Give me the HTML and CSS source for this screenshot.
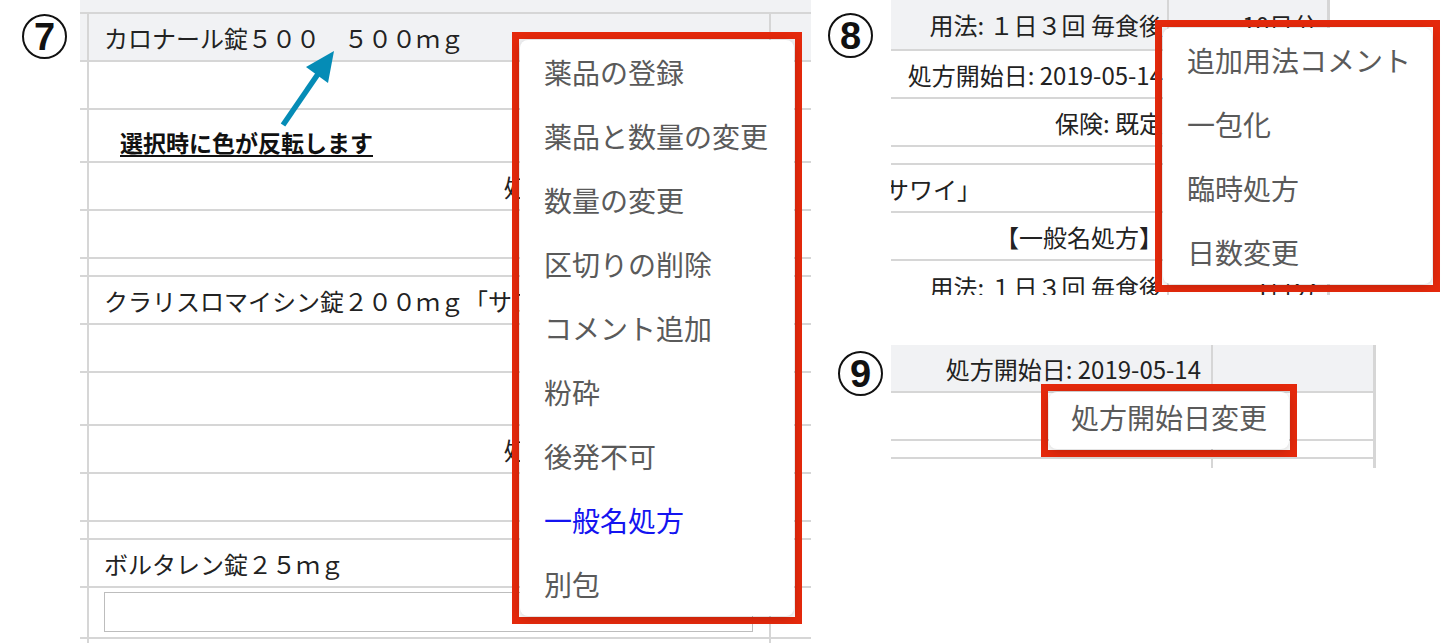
FILE: index.html
```html
<!DOCTYPE html>
<html lang="ja">
<head>
<meta charset="utf-8">
<title>処方メニュー</title>
<link rel="stylesheet" href="styles.css">
</head>
<body>
<div class="page">
  <section class="fig fig7">
    <div class="numcol"><div class="num">7</div></div>
    <div class="tbl t7">
      <div class="row strip"><div class="lead"></div><div class="main"></div><div class="side"></div></div>
      <div class="row sel"><div class="lead"></div><div class="main">カロナール錠５００　５００ｍｇ</div><div class="side"></div></div>
      <div class="row"><div class="lead"></div><div class="main r">【一般名処方】</div><div class="side"></div></div>
      <div class="row tall"><div class="lead"></div><div class="main r">用法: １日３回 毎食後</div><div class="side"></div></div>
      <div class="row"><div class="lead"></div><div class="main r">処方開始日: 2019-05-14</div><div class="side"></div></div>
      <div class="row"><div class="lead"></div><div class="main r">保険: 既定</div><div class="side"></div></div>
      <div class="row gap"><div class="lead"></div><div class="main"></div><div class="side"></div></div>
      <div class="row"><div class="lead"></div><div class="main">クラリスロマイシン錠２００ｍｇ「サワイ」</div><div class="side"></div></div>
      <div class="row"><div class="lead"></div><div class="main r">【一般名処方】</div><div class="side"></div></div>
      <div class="row tall"><div class="lead"></div><div class="main r">用法: １日３回 毎食後</div><div class="side"></div></div>
      <div class="row"><div class="lead"></div><div class="main r">処方開始日: 2019-05-14</div><div class="side"></div></div>
      <div class="row"><div class="lead"></div><div class="main r">保険: 既定</div><div class="side"></div></div>
      <div class="row gap"><div class="lead"></div><div class="main"></div><div class="side"></div></div>
      <div class="row"><div class="lead"></div><div class="main">ボルタレン錠２５ｍｇ</div><div class="side"></div></div>
      <div class="row in"><div class="lead"></div><div class="main top"><div class="field"></div></div><div class="side"></div></div>
      <div class="row"><div class="lead"></div><div class="main"></div><div class="side"></div></div>
    </div>

    <svg class="arrow" viewBox="270 40 80 100" width="80" height="100" aria-hidden="true">
      <line x1="283" y1="125" x2="318" y2="74" stroke="#058cb6" stroke-width="5.5" stroke-linecap="butt"/>
      <polygon points="334,51 306,67 328,83" fill="#058cb6"/>
    </svg>
    <p class="note">選択時に色が反転します</p>

    <div class="pop pop7">
      <ul class="menu">
        <li class="item">薬品の登録</li>
        <li class="item">薬品と数量の変更</li>
        <li class="item">数量の変更</li>
        <li class="item">区切りの削除</li>
        <li class="item">コメント追加</li>
        <li class="item">粉砕</li>
        <li class="item">後発不可</li>
        <li class="item blue">一般名処方</li>
        <li class="item">別包</li>
      </ul>
    </div>
  </section>

  <div class="right">
    <section class="fig fig8">
      <div class="numcol"><div class="num">8</div></div>
      <div class="tbl t8">
        <div class="row sel first"><div class="main r">用法: １日３回 毎食後</div><div class="side">10日分</div></div>
        <div class="row"><div class="main r">処方開始日: 2019-05-14</div><div class="side"></div></div>
        <div class="row"><div class="main r">保険: 既定</div><div class="side"></div></div>
        <div class="row gap"><div class="main"></div><div class="side"></div></div>
        <div class="row"><div class="main cut">サワイ」</div><div class="side"></div></div>
        <div class="row"><div class="main r">【一般名処方】</div><div class="side"></div></div>
        <div class="row tall"><div class="main r">用法: １日３回 毎食後</div><div class="side">1日分</div></div>
      </div>
      <div class="pop pop8">
        <ul class="menu">
          <li class="item">追加用法コメント</li>
          <li class="item">一包化</li>
          <li class="item">臨時処方</li>
          <li class="item">日数変更</li>
        </ul>
      </div>
    </section>

    <section class="fig fig9">
      <div class="numcol"><div class="num">9</div></div>
      <div class="tbl t9">
        <div class="row sel"><div class="main r">処方開始日: 2019-05-14</div><div class="side"></div></div>
        <div class="row"><div class="main"></div><div class="side"></div></div>
        <div class="row gap"><div class="main"></div><div class="side"></div></div>
        <div class="row"><div class="main"></div><div class="side"></div></div>
      </div>
      <div class="pop pop9">
        <ul class="menu menu9">
          <li class="item short">処方開始日変更</li>
        </ul>
      </div>
    </section>
  </div>
</div>
</body>
</html>
```

FILE: styles.css
```css
* {
  box-sizing: border-box;
  margin: 0;
  padding: 0;
}

html,
body {
  width: 1441px;
  height: 643px;
  overflow: hidden;
  background: #ffffff;
}

body {
  font-family: "Noto Sans CJK JP", "Noto Sans", sans-serif;
  color: #222222;
}

.page {
  display: flex;
  width: 1441px;
  height: 643px;
}

.fig {
  position: relative;
  display: flex;
  flex: none;
}

.numcol {
  flex: none;
  width: 80px;
}

.num {
  width: 45px;
  height: 45px;
  border: 2.5px solid #111111;
  border-radius: 50%;
  display: flex;
  align-items: center;
  justify-content: center;
  font-family: "Liberation Sans", Arial, sans-serif;
  font-weight: bold;
  font-size: 38px;
  line-height: 1;
  color: #111111;
}

/* ---------- tables ---------- */
.tbl {
  flex: none;
  overflow: hidden;
}

.row {
  display: flex;
  height: 48px;
  border-bottom: 2px solid #d6d6d6;
  font-size: 24px;
  white-space: nowrap;
}

.row.tall {
  height: 53px;
}

.row.gap {
  height: 18px;
}

.row.in {
  height: 51px;
}

.row.strip {
  height: 14px;
  background: #f1f2f4;
}

.row.sel {
  background: #f1f2f4;
}

.lead {
  flex: none;
  width: 9px;
  border-right: 2px solid #d6d6d6;
}

.main {
  flex: 1;
  min-width: 0;
  display: flex;
  align-items: center;
  padding: 0 10px 0 15px;
  border-right: 2px solid #d6d6d6;
  overflow: hidden;
}

.main.r {
  justify-content: flex-end;
}

.main.top {
  align-items: flex-start;
  padding-top: 4px;
}

.side {
  flex: none;
  display: flex;
  align-items: center;
  justify-content: flex-end;
  padding-right: 10px;
  overflow: hidden;
}

.strip .lead,
.strip .main {
  border-right: none;
}

.field {
  width: 649px;
  height: 40px;
  border: 1px solid #bdbdbd;
  background: #ffffff;
}

/* panel 7 */
.fig7 {
  width: 811px;
  height: 643px;
}

.fig7 .numcol {
  padding: 14px 0 0 22px;
}

.t7 {
  width: 731px;
}

.t7 .side {
  width: 40px;
}

/* right column */
.right {
  display: flex;
  flex-direction: column;
  width: 630px;
}

/* panel 8 */
.fig8 {
  height: 295px;
}

.fig8 .numcol {
  padding: 13px 0 0 17px;
}

.t8 {
  width: 439px;
  height: 295px;
}

.t8 .row.first {
  height: 51px;
}

.t8 .main,
.t9 .main {
  padding-left: 0;
}

.t8 .main {
  padding-right: 4px;
}

.t8 .main.cut {
  padding-left: 0;
  text-indent: -6px;
}

.t8 .side {
  width: 161px;
  border-right: 3px solid #d6d6d6;
}

/* panel 9 */
.fig9 {
  margin-top: 50px;
  height: 123px;
}

.fig9 .numcol {
  padding: 6px 0 0 27px;
}

.t9 {
  width: 485px;
  height: 123px;
}

.t9 .side {
  width: 163px;
  border-right: 3px solid #d6d6d6;
}

/* ---------- annotations ---------- */
.arrow {
  position: absolute;
  left: 270px;
  top: 40px;
}

.note {
  position: absolute;
  left: 120px;
  top: 129px;
  font-size: 23px;
  line-height: 26px;
  font-weight: bold;
  color: #111111;
  text-decoration: underline;
  text-decoration-thickness: 2px;
  text-underline-offset: 3px;
  white-space: nowrap;
}

/* ---------- context menus ---------- */
.pop {
  position: absolute;
  border: 7px solid #e4290c;
  padding: 1px;
}

.menu {
  list-style: none;
  background: #ffffff;
  border-radius: 8px;
  box-shadow: 0 2px 10px rgba(0, 0, 0, 0.18);
}

.item {
  height: 64px;
  line-height: 64px;
  padding-left: 24px;
  font-size: 28px;
  color: #5a5a5a;
  white-space: nowrap;
}

.item.blue {
  color: #1414f0;
}

.pop7 {
  left: 512px;
  top: 32px;
  width: 290px;
}

.pop8 {
  left: 344px;
  top: 20px;
  width: 285px;
}

.pop9 {
  left: 230px;
  top: 39px;
  width: 256px;
}

.menu9 {
  padding-bottom: 7px;
}

.item.short {
  height: 50px;
  line-height: 50px;
  padding-left: 22px;
}
```
